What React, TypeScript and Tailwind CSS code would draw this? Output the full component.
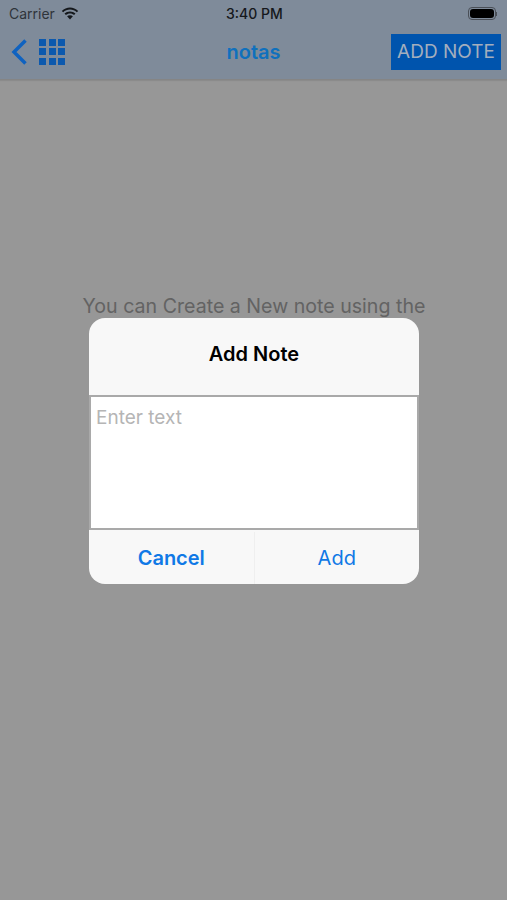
import React from 'react';

const font = { fontFamily: '"Inter", "Liberation Sans", sans-serif' };

const App = () => {
  return (
    <div className="relative w-[507px] h-[900px] overflow-hidden bg-[#979797]" style={font}>
      {/* top bars */}
      <div className="h-[80px] bg-[#7f8b9a] border-b border-[#858585] shadow-[0_1px_1px_rgba(0,0,0,0.08)]">
        <div className="relative flex items-center justify-between h-[27px] pl-[9px] pr-[10px]">
          <div className="flex items-center gap-[7px]">
            <span className="text-[14px] leading-none text-[#2f343a]">Carrier</span>
            <svg width="18" height="13" viewBox="0 0 18 13" fill="#15181c" className="mb-[1px] -ml-[1px]">
              <path d="M9 2.600c2.600 0 5 1 6.800 2.700L17.200 4C14.900 1.800 12.100.4 9 .4S3.100 1.800.8 4l1.400 1.300C4 3.600 6.400 2.600 9 2.600z" />
              <path d="M9 6.400c1.600 0 3 .6 4.100 1.600l1.400-1.400C13 5.200 11.100 4.400 9 4.400s-4 .8-5.500 2.200L4.900 8C6 7 7.400 6.400 9 6.400z" />
              <path d="M9 8.200c-1.100 0-2.100.4-2.900 1.100L9 12.600l2.900-3.300C11.100 8.600 10.100 8.200 9 8.200z" />
            </svg>
          </div>
          <span className="absolute left-[226px] top-[6px] text-[14px] leading-[16px] font-medium text-[#15181c]">3:40 PM</span>
          <div className="flex items-center">
            <div className="w-[28px] h-[13px] rounded-[4px] border border-[#4a4f57] p-[1px]">
              <div className="w-full h-full rounded-[3px] bg-black" />
            </div>
            <div className="w-[1px] h-[4px] bg-[#4a4f57]" />
          </div>
        </div>
        <div className="relative flex items-center justify-between h-[53px] pl-[11px] pr-[6px]">
          <div className="flex items-center gap-[12px] mb-[4px]">
            <svg width="16" height="26" viewBox="0 0 16 26" fill="none" stroke="#0f62c0" strokeWidth="3.5">
              <path d="M14.500 1.500 3 13l11.500 11.500" />
            </svg>
            <div className="grid grid-cols-3 gap-[2.5px]">
              {Array.from({ length: 9 }, (_, i) => (
                <div key={i} className="w-[7px] h-[7px] bg-[#0c59ae]" />
              ))}
            </div>
          </div>
          <span className="absolute left-0 right-0 top-[14px] text-center text-[20px] leading-[22px] font-semibold text-[#0f70bd]">notas</span>
          <div className="flex items-center justify-center w-[110px] h-[36px] mb-[3px] bg-[#0054ad] text-[19px] text-[#a3aebd]">ADD NOTE</div>
        </div>
      </div>

      {/* page behind the dialog */}
      <p className="mt-[214px] pl-[1px] text-center text-[19.6px] leading-[24px] text-[#636363]">You can Create a New note using the</p>

      {/* dialog */}
      <div className="absolute left-[89px] top-[318px] w-[330px] h-[266px] flex flex-col rounded-[16px] overflow-hidden bg-[#f8f8f8]">
        <div className="flex items-center justify-center h-[77px] pb-[6px] text-[20px] font-semibold text-black">Add Note</div>
        <div className="h-[135px] pl-[5px] pt-[9px] bg-white border-2 border-[#a9a9a9] text-[19px] leading-[24px] text-[#b5b5b5]">Enter text</div>
        <div className="flex flex-1 pt-[2px]">
          <button className="flex-1 border-r border-[#efefef] text-[20px] font-semibold text-[#1079e6]">Cancel</button>
          <button className="flex-1 text-[20px] text-[#1079e6]">Add</button>
        </div>
      </div>
    </div>
  );
};

export default App;
